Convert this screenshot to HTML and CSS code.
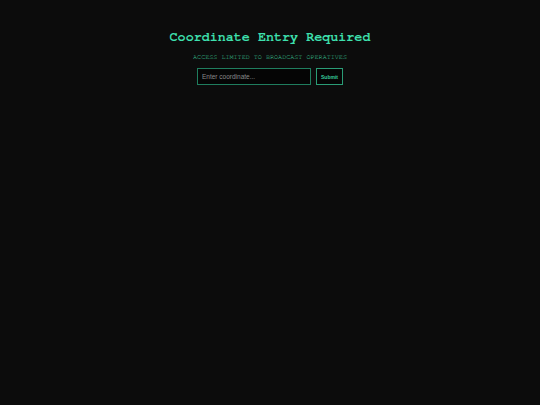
FILE: index.html
```html
<!DOCTYPE html>
<html>
<head>
<meta charset="utf-8">
<link rel="stylesheet" href="styles.css">
</head>
<body>
<main class="gate">
  <h1 class="title">Coordinate Entry Required</h1>
  <p class="subtitle">ACCESS LIMITED TO BROADCAST OPERATIVES</p>
  <form class="entry">
    <input class="coord" type="text" placeholder="Enter coordinate...">
    <button class="submit" type="button">Submit</button>
  </form>
</main>
</body>
</html>
```
FILE: styles.css
```css
html, body {
  margin: 0;
  padding: 0;
  background: #0c0c0c;
  height: 100%;
}
.gate {
  display: flex;
  flex-direction: column;
  align-items: center;
  padding-top: 29px;
}
.title {
  margin: 0;
  font-family: "Nimbus Mono PS", "Nimbus Mono L", FreeMono, Courier, "Liberation Mono", monospace;
  font-weight: bold;
  font-size: 13.4px;
  line-height: 17px;
  color: #3ee0ae;
}
.subtitle {
  margin: 7px 0 0;
  font-family: "Nimbus Mono PS", "Nimbus Mono L", FreeMono, Courier, "Liberation Mono", monospace;
  font-size: 6.75px;
  line-height: 8px;
  color: #3ccf9f;
}
.entry {
  margin-top: 7px;
  display: flex;
  gap: 5px;
}
.coord {
  box-sizing: border-box;
  width: 114px;
  height: 17px;
  margin: 0;
  padding: 0 4px;
  background: #050505;
  border: 1px solid #1f7d5e;
  color: #ccc;
  font-family: "Liberation Sans", sans-serif;
  font-size: 6.5px;
  outline: none;
}
.coord::placeholder {
  color: #8a8a8a;
}
.submit {
  box-sizing: border-box;
  width: 27px;
  height: 17px;
  margin: 0;
  padding: 0;
  background: #050505;
  border: 1px solid #2a9c76;
  color: #36c899;
  font-family: "Liberation Sans", sans-serif;
  font-weight: bold;
  font-size: 5px;
}
```
